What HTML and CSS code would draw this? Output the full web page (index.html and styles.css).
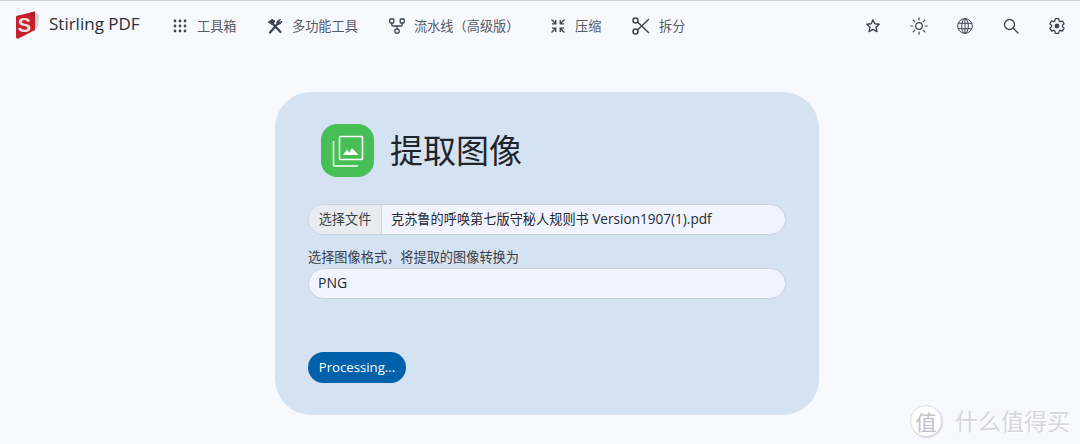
FILE: index.html
```html
<!DOCTYPE html>
<html lang="zh">
<head>
<meta charset="utf-8">
<title>Stirling PDF</title>
<link rel="stylesheet" href="styles.css">
</head>
<body>
<nav class="navbar">
  <div class="brand">
    <svg class="logo" viewBox="0 0 24 28" width="24" height="28">
      <path d="M20 0.500 L24 4 L23 16 L8 26 Z" fill="#d4d0d0"/>
      <path d="M1 6 Q1 5 2 4.700 L20 0.500 L20 19 L3 27.800 Q1 28 1 26 Z" fill="#c4222a"/>
      <path d="M15 1.700 L20 0.500 L20 7 Z" fill="#a81b20"/>
      <text x="9.500" y="21" class="logo-s">S</text>
    </svg>
    <span class="brand-name">Stirling PDF</span>
  </div>
  <ul class="nav-links">
    <li class="nav-item nav-tools">
      <svg class="icon" viewBox="0 0 16 16"><g fill="#3d4450"><circle cx="3" cy="3" r="1.400"/><circle cx="8" cy="3" r="1.400"/><circle cx="13" cy="3" r="1.400"/><circle cx="3" cy="8" r="1.400"/><circle cx="8" cy="8" r="1.400"/><circle cx="13" cy="8" r="1.400"/><circle cx="3" cy="13" r="1.400"/><circle cx="8" cy="13" r="1.400"/><circle cx="13" cy="13" r="1.400"/></g></svg>
      <span class="nav-text">工具箱</span>
    </li>
    <li class="nav-item nav-multi">
      <svg class="icon" viewBox="0 0 16 16"><g fill="none" stroke="#3d4450" stroke-linecap="round"><path d="M3 14.500 L10 6.500" stroke-width="2.200"/><path d="M13.500 14 L5.500 5.500" stroke-width="2.200"/><path d="M1.500 4 L5 1.500 L8 3 L5.500 6.500 Z" fill="#3d4450" stroke-width="1"/><path d="M9.500 5 Q10 2 13.500 1.500 L12 3.500 L13 4.500 L15 3 Q14.500 6.500 11 6.500" fill="#3d4450" stroke-width="1"/></g></svg>
      <span class="nav-text">多功能工具</span>
    </li>
    <li class="nav-item nav-flow">
      <svg class="icon" viewBox="0 0 16 16"><g fill="none" stroke="#3d4450" stroke-width="1.300"><rect x="0.800" y="1" width="4" height="4" rx="0.800"/><rect x="11.200" y="1" width="4" height="4" rx="0.800"/><circle cx="8" cy="13" r="2.200"/><path d="M2.800 5 V7 Q2.800 8 4 8 H12 Q13.200 8 13.200 7 V5 M8 8 V10.800"/></g></svg>
      <span class="nav-text">流水线（高级版）</span>
    </li>
    <li class="nav-item nav-compress">
      <svg class="icon" viewBox="0 0 16 16"><g fill="none" stroke="#3d4450" stroke-width="1.300"><path d="M1.500 1.500 L5.500 5.500 M5.800 2 V5.800 H2"/><path d="M14.500 1.500 L10.500 5.500 M10.200 2 V5.800 H14"/><path d="M1.500 14.500 L5.500 10.500 M5.800 14 V10.200 H2"/><path d="M14.500 14.500 L10.500 10.500 M10.200 14 V10.200 H14"/></g></svg>
      <span class="nav-text">压缩</span>
    </li>
    <li class="nav-item nav-split">
      <svg class="icon icon-large" viewBox="0 0 18 18"><g fill="none" stroke="#3d4450" stroke-width="1.500"><circle cx="3.500" cy="3.500" r="2.500"/><circle cx="3.500" cy="14.500" r="2.500"/><path d="M5.500 5 L17 16 M5.500 13 L17 2"/></g></svg>
      <span class="nav-text">拆分</span>
    </li>
  </ul>
  <div class="nav-actions">
    <svg class="action" viewBox="0 0 16 16"><path d="M8 1.800 L9.800 5.800 L14.200 6.300 L11 9.200 L11.900 13.600 L8 11.400 L4.100 13.600 L5 9.200 L1.800 6.300 L6.200 5.800 Z" fill="none" stroke="#3d4450" stroke-width="1.400" stroke-linejoin="round"/></svg>
    <svg class="action action-sun" viewBox="0 0 18 18"><g fill="none" stroke="#3d4450" stroke-width="1.200" stroke-linecap="round"><circle cx="9" cy="9" r="3.300"/><path d="M9 .8 V2.800 M9 15.200 V17.200 M.8 9 H2.800 M15.200 9 H17.200 M3.200 3.200 L4.600 4.600 M13.400 13.400 L14.800 14.800 M3.200 14.800 L4.600 13.400 M13.400 4.600 L14.800 3.200"/></g></svg>
    <svg class="action" viewBox="0 0 16 16"><g fill="none" stroke="#3d4450" stroke-width="1"><circle cx="8" cy="8" r="7.300"/><ellipse cx="8" cy="8" rx="3.300" ry="7.300"/><path d="M8 .7 V15.300 M1.300 5.300 H14.700 M1.300 10.700 H14.700"/></g></svg>
    <svg class="action" viewBox="0 0 16 16"><g fill="none" stroke="#3d4450" stroke-width="1.300" stroke-linecap="round"><circle cx="6.500" cy="6.500" r="5"/><path d="M10.300 10.300 L15 15"/></g></svg>
    <svg class="action" viewBox="1 1 22 22"><path d="M19.430 12.980c.04-.32.07-.64.07-.98s-.03-.66-.07-.98l2.110-1.650c.19-.15.24-.42.12-.64l-2-3.460c-.12-.22-.39-.3-.61-.22l-2.490 1c-.52-.4-1.080-.73-1.690-.98l-.38-2.650C14.460 2.180 14.250 2 14 2h-4c-.25 0-.46.18-.49.42l-.38 2.650c-.61.25-1.170.59-1.690.98l-2.490-1c-.23-.09-.49 0-.61.22l-2 3.460c-.13.22-.07.49.12.64l2.110 1.650c-.04.32-.07.65-.07.98s.03.66.07.98l-2.110 1.650c-.19.15-.24.42-.12.64l2 3.460c.12.22.39.3.61.22l2.490-1c.52.4 1.080.73 1.690.98l.38 2.650c.03.24.24.42.49.42h4c.25 0 .46-.18.49-.42l.38-2.650c.61-.25 1.170-.59 1.690-.98l2.490 1c.23.09.49 0 .61-.22l2-3.460c.12-.22.07-.49-.12-.64l-2.110-1.650z" fill="none" stroke="#3d4450" stroke-width="1.700"/><circle cx="12" cy="12" r="3.300" fill="#3d4450"/></svg>
  </div>
</nav>
<main class="page">
  <section class="card">
    <header class="card-head">
      <div class="badge">
        <svg viewBox="0 0 32 32" width="32" height="32"><g fill="none" stroke="#fff" stroke-width="1.500"><rect x="7.500" y="1.500" width="23" height="23" rx="1"/><path d="M1.500 6 V30 Q1.500 31 2.500 31 H26"/></g><path d="M11 20 L15 14.500 L17.500 17.500 L20 13 L26.500 20 Z" fill="#fff"/></svg>
      </div>
      <h1 class="title">提取图像</h1>
    </header>
    <div class="file-field">
      <span class="file-btn">选择文件</span>
      <span class="file-name">克苏鲁的呼唤第七版守秘人规则书 <span class="file-version">Version1907(1).pdf</span></span>
    </div>
    <label class="format-label">选择图像格式，将提取的图像转换为</label>
    <div class="select">PNG</div>
    <button class="submit">Processing...</button>
  </section>
</main>
<div class="watermark">
  <span class="wm-mark">值</span>
  <span class="wm-text">什么值得买</span>
</div>
</body>
</html>
```
FILE: styles.css
```css
* { box-sizing: border-box; }
html, body { height: 100%; }
body {
  margin: 0;
  background: #f8f9ff;
  color: #1a1c20;
  font-family: "Open Sans", "Noto Sans", "Noto Sans CJK SC", sans-serif;
  border-top: 1px solid #cfd0d3;
  overflow: hidden;
  position: relative;
}
.navbar {
  display: flex;
  align-items: center;
  height: 50px;
  padding-left: 15px;
}
.brand { display: flex; align-items: center; width: 157px; margin-top: -3px; }
.logo { margin-right: 10px; flex: none; }
.logo-s { font: bold 20px "Liberation Sans", sans-serif; fill: #f3dedd; text-anchor: middle; }
.brand-name { font-size: 17px; line-height: 22px; padding-bottom: 1px; color: #2a2f38; white-space: nowrap; }
.nav-links { display: flex; list-style: none; margin: 0; padding: 0; flex: 1; }
.nav-item {
  display: flex;
  align-items: center;
  gap: 9px;
  font-size: 13.200px;
  color: #555b66;
  white-space: nowrap;
}
.nav-text { padding-bottom: 2px; }
.nav-tools { width: 95px; }
.nav-multi { width: 122px; gap: 9px; }
.nav-flow { width: 161px; }
.nav-compress { width: 82px; }
.icon { width: 16px; height: 16px; flex: none; }
.icon-large { width: 18px; height: 18px; }
.nav-actions {
  display: flex;
  align-items: center;
  gap: 30px;
  padding-right: 15px;
}
.action { width: 16px; height: 16px; display: block; }
.action-sun { width: 18px; height: 18px; margin: 0 -1px; }
.page { display: flex; justify-content: center; padding: 41px 0 0 14px; }
.card {
  width: 544px;
  height: 323px;
  padding: 32px 33px 0;
  background: #d5e2f2;
  border-radius: 36px;
}
.card-head { display: flex; align-items: center; gap: 16px; padding-left: 13px; height: 53px; }
.badge {
  width: 53px;
  height: 53px;
  border-radius: 16px;
  background: #47be56;
  display: flex;
  align-items: center;
  justify-content: center;
}
.title { margin: 0; padding-bottom: 3px; font-size: 33px; font-weight: 400; color: #20242b; }
.file-field {
  display: flex;
  align-items: center;
  height: 31px;
  margin-top: 27px;
  background: #f1f4fe;
  border: 1px solid #c9d2e1;
  border-radius: 16px;
  overflow: hidden;
  font-size: 13.200px;
}
.file-btn {
  height: 100%;
  width: 73px;
  padding-bottom: 2px;
  display: flex;
  align-items: center;
  justify-content: center;
  background: #e8ebef;
  border-right: 1px solid #d5dbe5;
  color: #3a3f48;
}
.file-name { padding: 0 0 3px 9px; color: #262a31; }
.file-version { font-size: 13.600px; }
.format-label {
  display: block;
  margin-top: 13px;
  height: 20px;
  line-height: 18px;
  font-size: 13.200px;
  color: #3a3f48;
}
.select {
  height: 31px;
  line-height: 27px;
  padding-left: 9px;
  background: #f1f4fe;
  border: 1px solid #c9d2e1;
  border-radius: 16px;
  font-size: 14px;
  color: #262a31;
}
.submit {
  display: block;
  margin-top: 53px;
  width: 98px;
  height: 31px;
  padding: 0 0 2px;
  border: 0;
  border-radius: 16px;
  background: #0061ab;
  color: #fff;
  font: 13.200px "Open Sans", "Noto Sans", sans-serif;
}
.watermark {
  position: absolute;
  right: 10px;
  bottom: 7px;
  display: flex;
  align-items: center;
  gap: 13px;
}
.wm-mark {
  width: 32px;
  height: 32px;
  border-radius: 50%;
  background: #fff;
  border: 1px solid #dfdfe4;
  box-shadow: 1px 1px 1px #d8d8dc;
  color: #c0c0c5;
  display: flex;
  align-items: center;
  justify-content: center;
  font-size: 21px;
}
.wm-text { font-size: 23px; line-height: 32px; color: #d6d6db; text-shadow: 1px 1px 0 #fff; }
```
